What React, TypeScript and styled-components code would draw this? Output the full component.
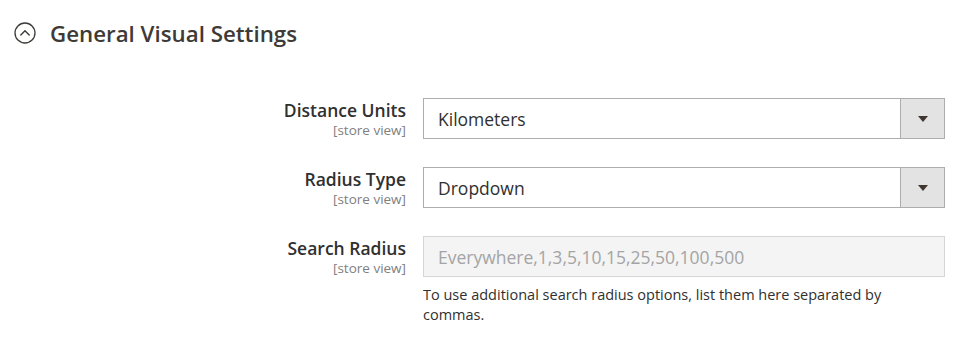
import React from "react";
import styled, { createGlobalStyle } from "styled-components";

const Global = createGlobalStyle`
  html, body { margin: 0; padding: 0; background: #fff; }
  body { font-family: "Open Sans", "Liberation Sans", sans-serif; color: #303030; }
`;

const Page = styled.div`
  width: 961px;
  height: 340px;
  box-sizing: border-box;
  padding: 20px 15px 0 14px;
`;

const Heading = styled.div`
  display: flex;
  align-items: center;
  gap: 14px;
  height: 26px;
  color: #3d3a37;
  font-size: 22.3px;
  font-weight: 600;
`;

const Fields = styled.div`
  display: flex;
  flex-direction: column;
  gap: 28px;
  margin-top: 52px;
`;

const Row = styled.div`
  display: grid;
  grid-template-columns: 392px 522px;
  column-gap: 17px;
`;

const Label = styled.div`
  text-align: right;
`;

const LabelText = styled.div`
  font-size: 17.5px;
  font-weight: 600;
  line-height: 24px;
  color: #303030;
`;

const Scope = styled.div`
  font-size: 13.5px;
  line-height: 16px;
  color: #808080;
`;

const Control = styled.div`
  display: flex;
  flex-direction: column;
`;

const Select = styled.div`
  display: flex;
  height: 41px;
  box-sizing: border-box;
  border: 1px solid #adadad;
  background: #fff;
`;

const SelectValue = styled.div`
  flex: 1;
  display: flex;
  align-items: center;
  padding-left: 14px;
  font-size: 17.5px;
  color: #303030;
`;

const SelectButton = styled.div`
  width: 43px;
  display: flex;
  align-items: center;
  justify-content: center;
  background: #e3e3e3;
  border-left: 1px solid #adadad;
`;

const Arrow = styled.div`
  width: 0;
  height: 0;
  border-left: 5px solid transparent;
  border-right: 5px solid transparent;
  border-top: 6px solid #41362f;
`;

const Input = styled.div`
  height: 41px;
  box-sizing: border-box;
  border: 1px solid #d6d6d6;
  background: #f4f4f4;
  display: flex;
  align-items: center;
  padding-left: 14px;
  font-size: 17.5px;
  color: #a4a4a4;
`;

const Note = styled.div`
  margin-top: 8px;
  font-size: 14.5px;
  line-height: 20px;
  color: #303030;
  padding-right: 30px;
`;

const CollapseIcon = () => (
  <svg width="22" height="22" viewBox="0 0 22 22" fill="none">
    <circle cx="11" cy="11" r="10" stroke="#3d3a37" strokeWidth="1.3" />
    <path d="M6.8 13 L11 8.8 L15.2 13" stroke="#3d3a37" strokeWidth="1.4" strokeLinecap="round" strokeLinejoin="round" />
  </svg>
);

const Field = ({ label, children }: { label: string; children: React.ReactNode }) => (
  <Row>
    <Label>
      <LabelText>{label}</LabelText>
      <Scope>[store view]</Scope>
    </Label>
    <Control>{children}</Control>
  </Row>
);

const Dropdown = ({ value }: { value: string }) => (
  <Select>
    <SelectValue>{value}</SelectValue>
    <SelectButton>
      <Arrow />
    </SelectButton>
  </Select>
);

export default function App() {
  return (
    <Page>
      <Global />
      <Heading>
        <CollapseIcon />
        <span>General Visual Settings</span>
      </Heading>
      <Fields>
        <Field label="Distance Units">
          <Dropdown value="Kilometers" />
        </Field>
        <Field label="Radius Type">
          <Dropdown value="Dropdown" />
        </Field>
        <Field label="Search Radius">
          <Input>Everywhere,1,3,5,10,15,25,50,100,500</Input>
          <Note>To use additional search radius options, list them here separated by commas.</Note>
        </Field>
      </Fields>
    </Page>
  );
}
